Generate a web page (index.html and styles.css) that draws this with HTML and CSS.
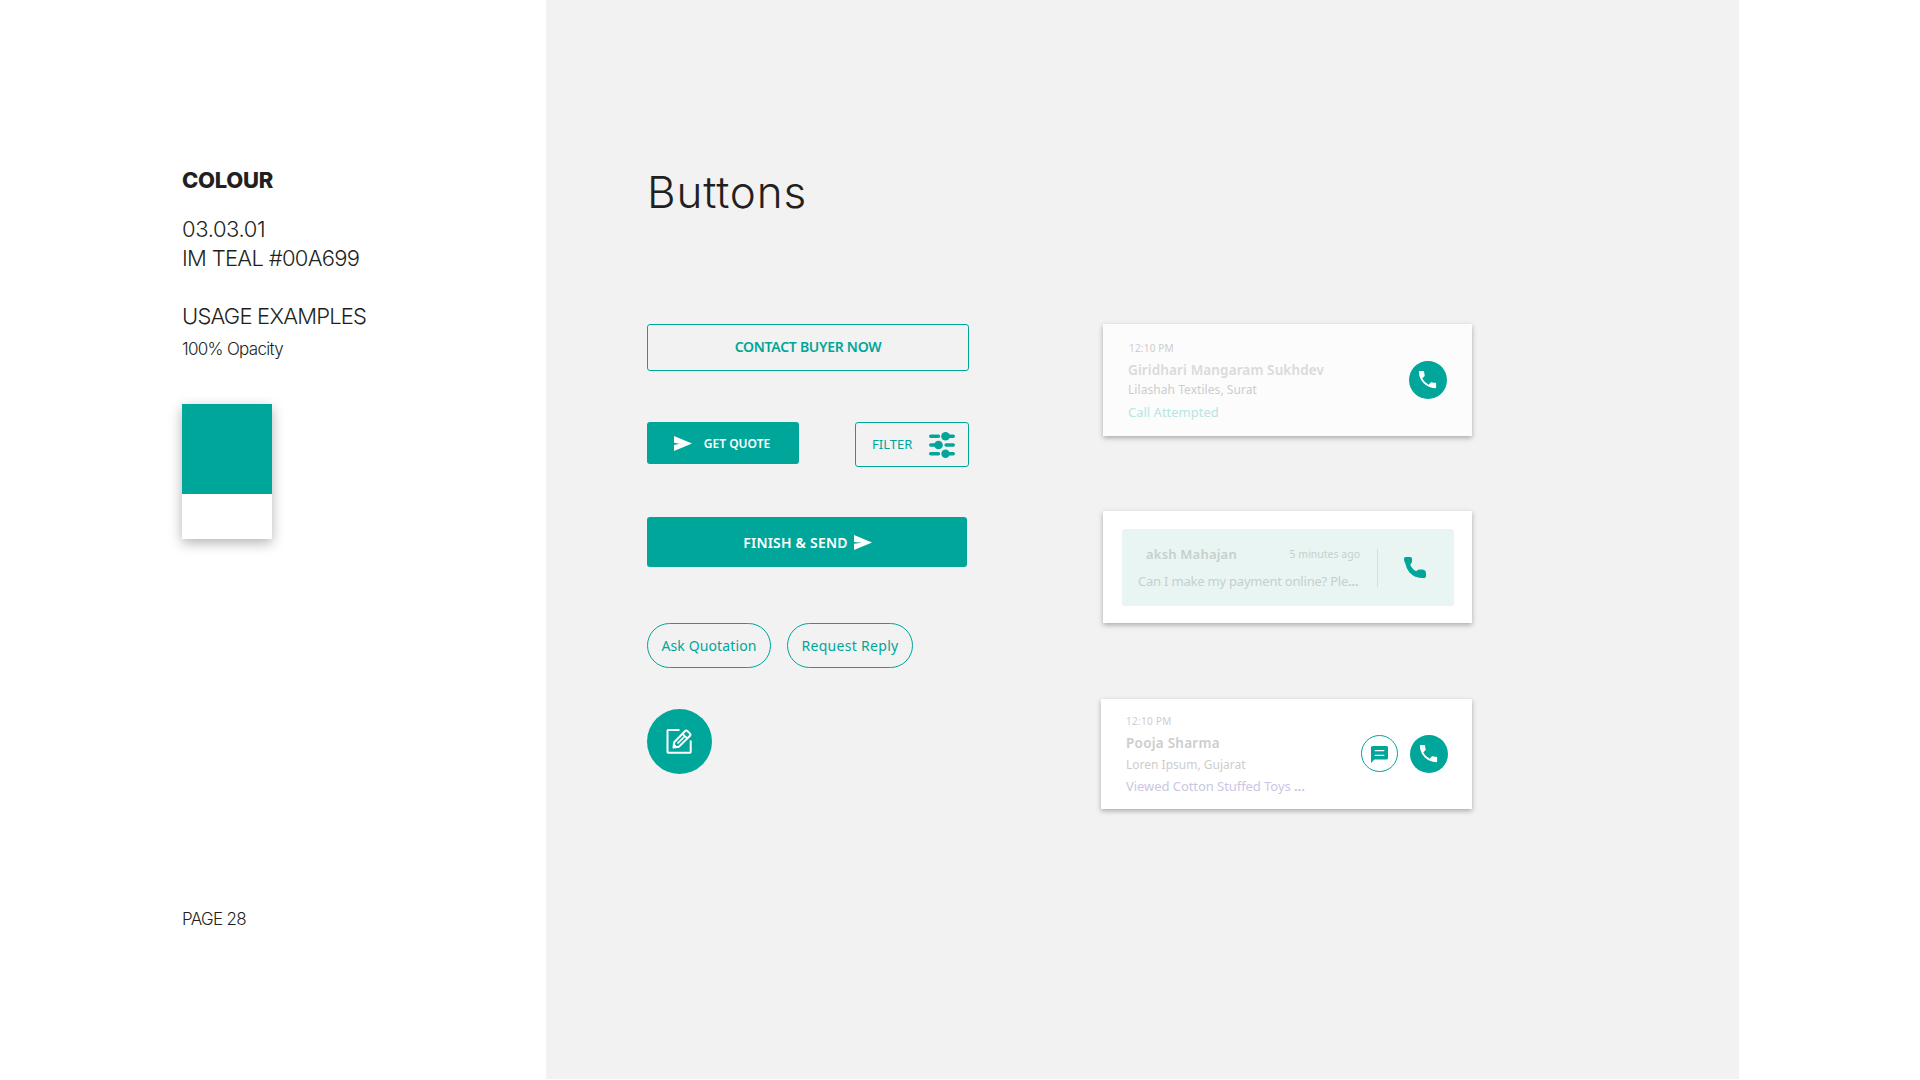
FILE: index.html
```
<!DOCTYPE html>
<html lang="en">

<head>
    <meta charset="UTF-8">
    <title>Buttons</title>
    <link rel="stylesheet" href="styles.css">
</head>

<body>
    <div class="page">
        <div class="sidebar">
            <h2>COLOUR</h2>
            <div class="code">03.03.01</div>
            <div class="teal-name">IM TEAL #00A699</div>
            <div class="usage">USAGE EXAMPLES</div>
            <div class="opacity">100% Opacity</div>
            <div class="swatch">
                <div class="swatch-color"></div>
            </div>
            <div class="page-number">PAGE 28</div>
        </div>

        <div class="panel">
            <h1>Buttons</h1>
            <div class="columns">
                <!-- Buttons -->
                <div class="buttons">
                    <button class="btn outline contact">CONTACT BUYER NOW</button>

                    <div class="row quote-row">
                        <button class="btn solid quote">
                            <svg width="18" height="15" viewBox="0 0 18 15"><path fill="#fff" d="M0 0L18 7.5 0 15V8.9L5.5 7.8 0 6.8z" /></svg>
                            <span>GET QUOTE</span>
                        </button>
                        <button class="btn outline filter">
                            <span>FILTER</span>
                            <svg width="26" height="26" viewBox="0 0 26 26">
                                <path d="M1.8 4.3H9.4M17 4.3H24.2M1.8 13H9M17.2 13H24.2M1.8 21.8H9.4M17 21.8H24.2" stroke="#00a699" stroke-width="3.6" stroke-linecap="round" />
                                <circle cx="16.5" cy="4.3" r="4.3" fill="#00a699" />
                                <circle cx="9.5" cy="13" r="4.3" fill="#00a699" />
                                <circle cx="16.5" cy="21.8" r="4.2" fill="#00a699" />
                            </svg>
                        </button>
                    </div>

                    <button class="btn solid finish">
                        <span>FINISH &amp; SEND</span>
                        <svg width="18" height="15" viewBox="0 0 18 15"><path fill="#fff" d="M0 0L18 7.5 0 15V8.7L8 7.8 0 7z" /></svg>
                    </button>

                    <div class="row pills">
                        <button class="btn outline pill ask">Ask Quotation</button>
                        <button class="btn outline pill request">Request Reply</button>
                    </div>

                    <button class="btn solid edit">
                        <svg width="26" height="26" viewBox="0 0 26 26" fill="none" stroke="#fff" stroke-width="2">
                            <path d="M13.5 2H2.2Q1.5 2 1.5 2.7V24Q1.5 24.7 2.2 24.7H24Q24.7 24.7 24.7 24V12.5" />
                            <path d="M7.5 19.5L8.2 14.2 19.2 3Q20.3 2 21.4 3L24 5.6Q25 6.7 24 7.7L12.8 18.8z" stroke-linejoin="round" />
                            <path d="M16.6 5.8L21.2 10.4M11.5 15.5L18.5 8.5" stroke-width="1.7" />
                            <path d="M7.5 19.5L8 16 11 19z" fill="#fff" stroke-width="1" />
                        </svg>
                    </button>
                </div>

                <!-- Cards -->
                <div class="cards">
                    <div class="card call-card">
                        <div class="info">
                            <div class="time">12:10 PM</div>
                            <div class="name">Giridhari Mangaram Sukhdev</div>
                            <div class="company">Lilashah Textiles, Surat</div>
                            <div class="status">Call Attempted</div>
                        </div>
                        <div class="circle">
                            <svg width="23" height="23" viewBox="0 0 24 24"><path fill="#fff" d="M6.62 10.79c1.44 2.83 3.76 5.14 6.59 6.59l2.2-2.2c.27-.27.67-.36 1.02-.24 1.12.37 2.33.57 3.57.57.55 0 1 .45 1 1V20c0 .55-.45 1-1 1-9.39 0-17-7.61-17-17 0-.55.45-1 1-1h3.5c.55 0 1 .45 1 1 0 1.25.2 2.45.57 3.57.11.35.03.74-.25 1.02l-2.2 2.2z" /></svg>
                        </div>
                    </div>

                    <div class="card message-card">
                        <div class="message">
                            <div class="message-text">
                                <div class="message-head">
                                    <span class="sender">aksh Mahajan</span>
                                    <span class="ago">5 minutes ago</span>
                                </div>
                                <div class="preview">Can I make my payment online? Ple<b>...</b></div>
                            </div>
                            <div class="divider"></div>
                            <svg width="22" height="21" viewBox="0 0 22 21"><path fill="#00a699" d="M1.5 0H6.5Q8 0 8 1.6V4.5Q8 6 6.3 7.4 7.5 11.5 12.3 14.3 13.5 12.6 15.5 12.6H18.5Q22 13.5 22 16V19.3Q22 21 20.3 21 11 21.5 5.3 15.2 2.2 11.5 1.2 6 0 4.5 0 2.6V1.5Q0 0 1.5 0z" /></svg>
                        </div>
                    </div>

                    <div class="card viewed-card">
                        <div class="info">
                            <div class="time">12:10 PM</div>
                            <div class="name">Pooja Sharma</div>
                            <div class="company">Loren Ipsum, Gujarat</div>
                            <div class="status">Viewed Cotton Stuffed Toys <b>...</b></div>
                        </div>
                        <div class="circle chat">
                            <svg width="17" height="17" viewBox="0 0 17 17">
                                <path fill="#00a699" d="M1.5 0H15.5Q17 0 17 1.5V12Q17 13.6 15.5 13.6H3.4L0 17V1.5Q0 0 1.5 0z" />
                                <path d="M3.7 4.7H13.3M3.7 9.3H13.3" stroke="#fff" stroke-width="1.2" />
                            </svg>
                        </div>
                        <div class="circle">
                            <svg width="23" height="23" viewBox="0 0 24 24"><path fill="#fff" d="M6.62 10.79c1.44 2.83 3.76 5.14 6.59 6.59l2.2-2.2c.27-.27.67-.36 1.02-.24 1.12.37 2.33.57 3.57.57.55 0 1 .45 1 1V20c0 .55-.45 1-1 1-9.39 0-17-7.61-17-17 0-.55.45-1 1-1h3.5c.55 0 1 .45 1 1 0 1.25.2 2.45.57 3.57.11.35.03.74-.25 1.02l-2.2 2.2z" /></svg>
                        </div>
                    </div>
                </div>
            </div>
        </div>
    </div>
</body>

</html>
```
FILE: styles.css
```
* {
    box-sizing: border-box;
}

body {
    margin: 0;
    background-color: #fff;
    color: #231f20;
    font-family: "Noto Sans", sans-serif;
    overflow: hidden;
}

svg {
    display: block;
    flex-shrink: 0;
}

.page {
    display: flex;
    height: 1079px;
}

/* Left side */
.sidebar {
    width: 546px;
    padding: 166px 0 0 182px;
    font-family: Inter, sans-serif;
    font-size: 22px;
    font-weight: 300;
    line-height: 29px;
    white-space: nowrap;
}

.sidebar h2 {
    margin: 0 0 20px;
    font-size: 22px;
    font-weight: 800;
    letter-spacing: -0.3px;
}

.code {
    letter-spacing: -0.4px;
}

.teal-name {
    letter-spacing: -0.7px;
}

.usage {
    margin-top: 29px;
    letter-spacing: -0.8px;
}

.opacity {
    margin-top: 4px;
    font-size: 17px;
    letter-spacing: -0.7px;
}

.swatch {
    width: 90px;
    height: 135px;
    margin: 40px 0 366px;
    background-color: #fff;
    box-shadow: 0 4px 12px rgba(0, 0, 0, 0.3);
}

.swatch-color {
    height: 90px;
    background-color: #00a699;
}

.page-number {
    font-size: 17px;
    letter-spacing: -0.7px;
}

/* Right side */
.panel {
    width: 1193px;
    padding: 165px 0 0 101px;
    background-color: #f2f2f2;
}

h1 {
    margin: 0 0 105px;
    font-family: Inter, sans-serif;
    font-size: 44px;
    font-weight: 300;
    line-height: 54px;
    letter-spacing: 0.85px;
}

.columns {
    display: flex;
}

.buttons {
    width: 322px;
    margin-right: 132px;
}

.row {
    display: flex;
}

.btn {
    display: flex;
    align-items: center;
    justify-content: center;
    padding: 0;
    border: none;
    border-radius: 3px;
    font-family: inherit;
    font-size: 14px;
    white-space: nowrap;
}

.outline {
    border: 1px solid #00a699;
    background-color: transparent;
    color: #00a699;
}

.solid {
    background-color: #00a699;
    color: #fff;
    font-weight: 600;
}

.contact {
    width: 322px;
    height: 47px;
    padding-bottom: 2px;
    font-weight: 600;
    letter-spacing: -0.27px;
}

.quote-row {
    justify-content: space-between;
    align-items: flex-start;
    margin-top: 51px;
}

.quote {
    width: 152px;
    height: 42px;
    padding-right: 2px;
    gap: 12px;
    font-size: 12px;
}

.filter {
    justify-content: space-between;
    width: 114px;
    height: 45px;
    padding: 0 13px 0 16px;
    font-size: 13px;
}

.filter span {
    padding-bottom: 2px;
}

.finish {
    width: 320px;
    height: 50px;
    margin-top: 50px;
    padding-left: 1px;
    gap: 6px;
    letter-spacing: 0.2px;
}

.pills {
    gap: 16px;
    margin-top: 56px;
}

.pill {
    height: 45px;
    border-radius: 23px;
}

.ask {
    width: 124px;
    letter-spacing: 0.12px;
}

.request {
    width: 126px;
    letter-spacing: 0.3px;
}

.edit {
    width: 65px;
    height: 65px;
    margin-top: 41px;
    padding: 0 2px 2px 0;
    border-radius: 50%;
}

/* Cards */
.card {
    display: flex;
    background-color: #fff;
    box-shadow: 0 2px 5px rgba(0, 0, 0, 0.3);
    color: #cdcdcd;
    white-space: nowrap;
}

.info {
    flex: 1;
}

.time {
    padding-left: 1px;
    font-size: 10px;
    line-height: 12px;
    letter-spacing: 0.2px;
}

.name {
    margin-top: 7px;
    font-size: 13.5px;
    font-weight: 600;
    line-height: 18px;
    letter-spacing: 0.12px;
}

.company {
    font-size: 12px;
    line-height: 16px;
    letter-spacing: 0.06px;
}

.status {
    font-size: 13px;
    line-height: 18px;
}

.circle {
    display: flex;
    align-items: center;
    justify-content: center;
    align-self: center;
    width: 38px;
    height: 38px;
    border-radius: 50%;
    background-color: #00a699;
}

.circle svg {
    margin: 0 1px 1px 0;
}

.call-card {
    width: 369px;
    height: 112px;
    margin-left: 2px;
    padding: 0 25px;
    background-color: #fcfcfc;
}

.call-card .info {
    padding-top: 18px;
}

.call-card .name {
    color: #dadada;
}

.call-card .company {
    margin-top: 3px;
}

.call-card .status {
    margin-top: 5px;
    color: #b5e6e1;
}

.message-card {
    width: 369px;
    height: 112px;
    margin: 75px 0 76px 2px;
    padding: 18px 18px 17px 19px;
}

.message {
    display: flex;
    flex: 1;
    align-items: center;
    padding-left: 16px;
    border-radius: 3px;
    background-color: #e9f5f2;
    color: #c5d0cd;
}

.message-text {
    width: 222px;
}

.message-head {
    display: flex;
    justify-content: space-between;
    padding-left: 8px;
    line-height: 18px;
}

.sender {
    font-size: 13px;
    font-weight: 600;
    letter-spacing: 0.2px;
}

.ago {
    font-size: 10.5px;
}

.preview {
    margin-top: 9px;
    font-size: 13px;
    line-height: 18px;
    letter-spacing: -0.21px;
}

.divider {
    width: 1px;
    height: 38px;
    margin: 0 26px 0 17px;
    background-color: #d5e0dd;
}

.viewed-card {
    width: 371px;
    height: 110px;
    padding: 0 24px 0 25px;
}

.viewed-card .info {
    padding-top: 16px;
}

.viewed-card .time {
    padding-left: 0;
    letter-spacing: 0.3px;
}

.viewed-card .name {
    letter-spacing: 0.25px;
}

.viewed-card .company {
    margin-top: 5px;
    letter-spacing: 0;
}

.viewed-card .status {
    margin-top: 4px;
    color: #c9c7e3;
    letter-spacing: -0.06px;
}

.viewed-card .circle {
    margin-bottom: 1px;
}

.chat {
    width: 37px;
    height: 37px;
    margin-right: 12px;
    border: 1px solid #00a699;
    background-color: #fff;
}

.chat svg {
    margin: 1px 0 0;
}
```
